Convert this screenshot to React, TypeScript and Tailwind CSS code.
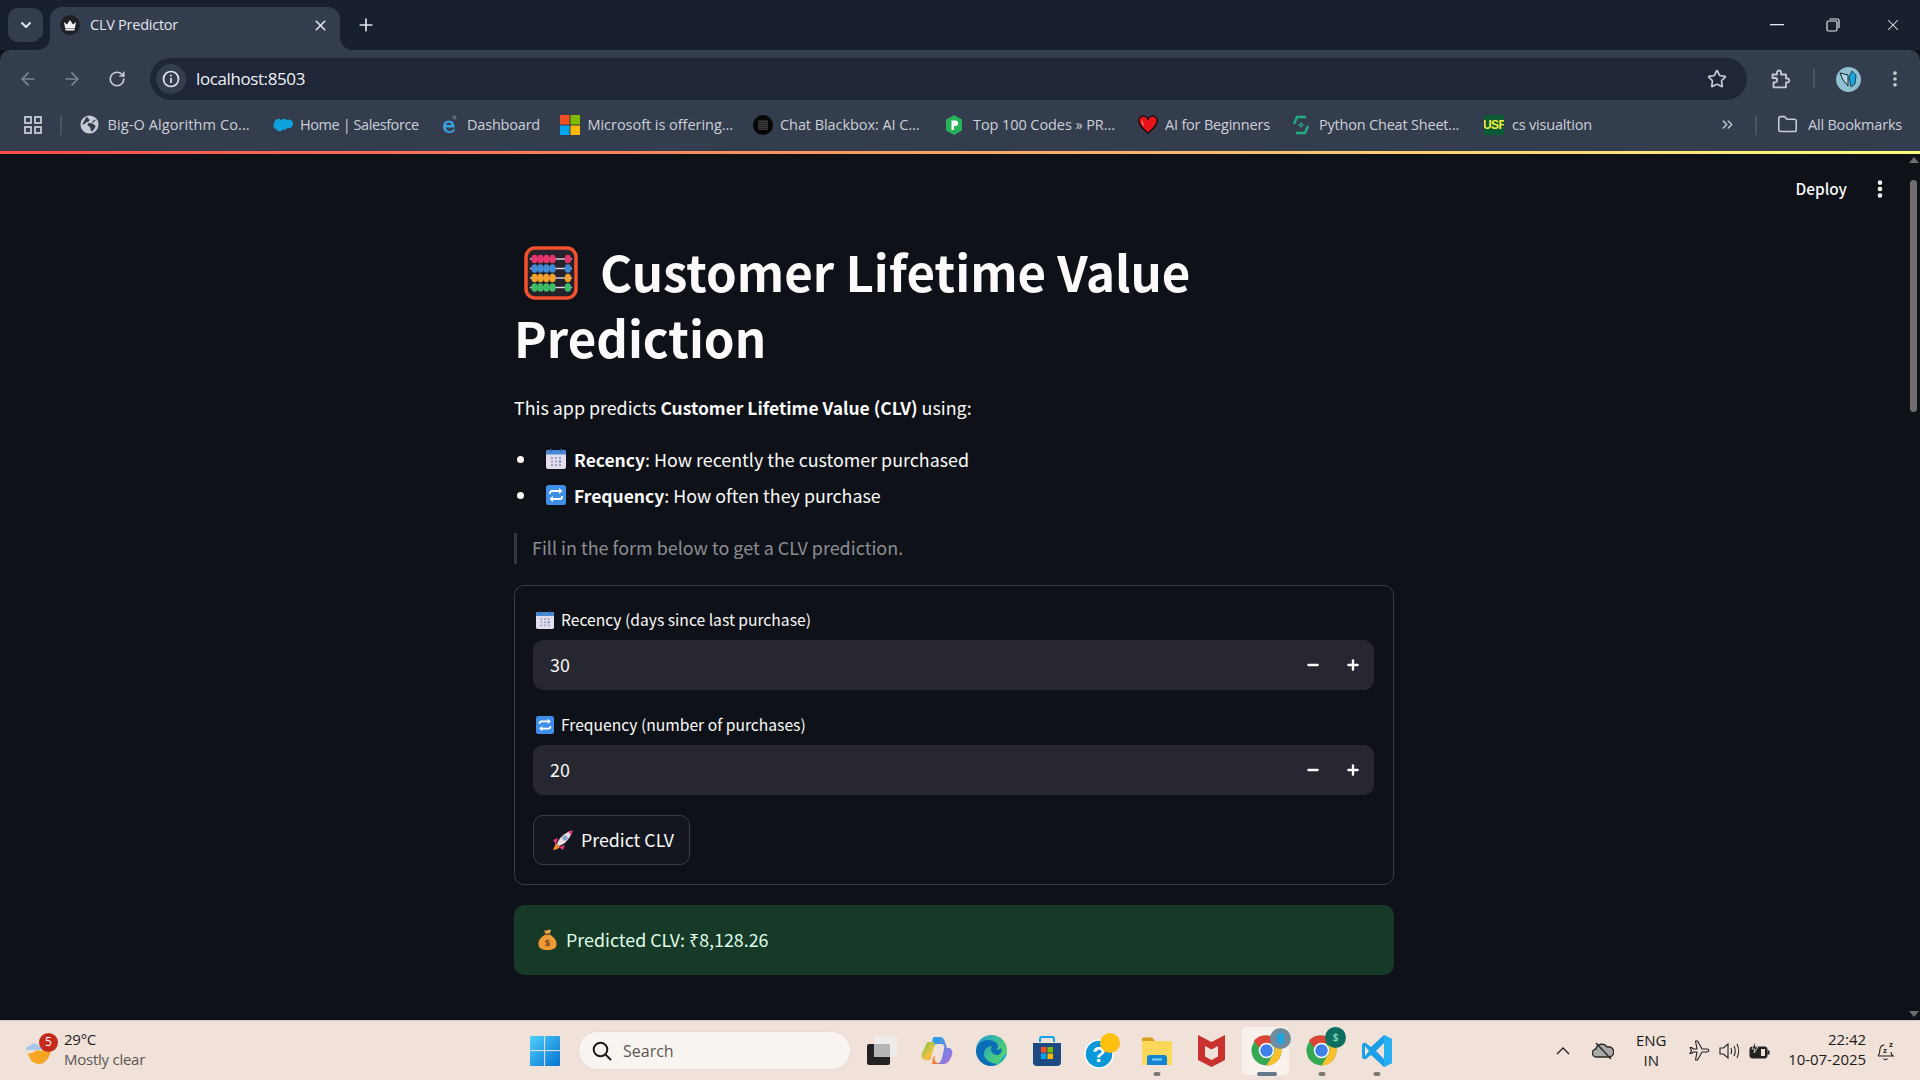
import React from "react";
import { ArrowLeft, ArrowRight, RotateCw, Star, X, Plus, ChevronDown, ChevronsRight, Folder, EllipsisVertical, Minus } from "lucide-react";

function Crown() {
  return (
    <svg width="20" height="20" viewBox="0 0 20 20">
      <circle cx="10" cy="10" r="10" fill="#1d2027" />
      <path d="M4 7l3 2.6L10 5l3 4.6L16 7l-1.2 6.5H5.200z" fill="#f5f5f5" />
      <rect x="5.500" y="14" width="9" height="1.500" fill="#f5f5f5" />
    </svg>
  );
}
function Globe() {
  return (
    <svg width="19" height="19" viewBox="0 0 20 20">
      <circle cx="10" cy="10" r="9.500" fill="#c6cbd4" />
      <path d="M7 1.500c1 2 3 2 3 4s-3 1.500-4 3-3 1-4 2M17 5c-2 0-4 1-4 3s2 2 3 3-1 4-3 6c-1 1-2-1-2-3s-3-2-3-4 3-2 5-1" fill="#333c4d" />
    </svg>
  );
}
function Salesforce() {
  return (
    <svg width="20" height="16" viewBox="0 0 24 17">
      <path d="M10 3a4.500 4.500 0 0 1 7-.6 5 5 0 0 1 7 4.700 5 5 0 0 1-6.500 4.800 4 4 0 0 1-5.500 1.800 4.600 4.600 0 0 1-8.300-.4A4.200 4.200 0 0 1 1.500 6.500 4.800 4.800 0 0 1 10 3z" fill="#0ea2dc" />
    </svg>
  );
}
function DashIcon() {
  return (
    <svg width="20" height="20" viewBox="0 0 20 20">
      <path d="M15 13.500c-1 2-2.800 2.700-4.300 2.700-2.400 0-3.700-1.700-3.700-3.700h8.500c.3-4.200-1.800-7-5.500-7-3.800 0-6 3-6 6.200 0 3.500 2.500 6.300 6.500 6.300 2.500 0 4.500-1.100 5.500-3.300zM7.200 10c.2-1.400 1.300-2.300 2.800-2.300s2.400.9 2.500 2.300z" fill="#3aa0dc" />
      <path d="M14 4l3-3M14 1l3 3" stroke="#6b7280" strokeWidth="1.500" />
    </svg>
  );
}
function MsLogo({ size = 20 }: { size?: number }) {
  return (
    <svg width={size} height={size} viewBox="0 0 20 20">
      <rect width="9.500" height="9.500" fill="#f25022" />
      <rect x="10.500" width="9.500" height="9.500" fill="#7fba00" />
      <rect y="10.500" width="9.500" height="9.500" fill="#00a4ef" />
      <rect x="10.500" y="10.500" width="9.500" height="9.500" fill="#ffb900" />
    </svg>
  );
}
function Blackbox() {
  const dots: React.ReactElement[] = [];
  for (let x = 0; x < 5; x++) for (let y = 0; y < 5; y++) dots.push(<circle key={x + "-" + y} cx={6 + x * 2} cy={6 + y * 2} r="0.6" fill="#bbb" />);
  return (
    <svg width="20" height="20" viewBox="0 0 20 20">
      <circle cx="10" cy="10" r="10" fill="#060606" />
      {dots}
    </svg>
  );
}
function PCode() {
  return (
    <svg width="18" height="20" viewBox="0 0 18 20">
      <path d="M9 0l8 4.500v11L9 20l-8-4.500v-11z" fill="#26b15a" />
      <path d="M6.500 15V5.500H11a2.800 2.800 0 0 1 0 5.500H9V15z" fill="#fff" />
    </svg>
  );
}
function Heart() {
  return (
    <svg width="22" height="20" viewBox="0 0 22 20">
      <path d="M11 19C4 13 1 10 1 6a5 5 0 0 1 10-1.500A5 5 0 0 1 21 6c0 4-3 7-10 13z" fill="#e8141c" stroke="#1a0606" strokeWidth="1.500" />
      <path d="M5 5.500c-1 1.500 0 3.500 1 5" stroke="#f88" strokeWidth="1.200" fill="none" />
    </svg>
  );
}
function PyIcon() {
  return (
    <svg width="18" height="20" viewBox="0 0 18 20" fill="none" stroke="#23ad82" strokeWidth="2.400">
      <path d="M14 2H5L2 9M4 18h9l3-7" />
      <path d="M7 10l2-2 2 2-2 2z" strokeWidth="1.200" />
    </svg>
  );
}
function Usf() {
  return (
    <div className="w-[20px] h-[20px] bg-[#0b5a33] flex items-center justify-center overflow-hidden">
      <span className="text-[#f6f03c] text-[12px] font-bold font-['Liberation_Sans',sans-serif] leading-none tracking-[-0.6px]">USF</span>
    </div>
  );
}
function AppsIcon() {
  return (
    <svg width="18" height="18" viewBox="0 0 18 18" fill="none" stroke="#c6cbd4" strokeWidth="1.800">
      <rect x="1" y="1" width="6" height="6" />
      <rect x="11" y="1" width="6" height="6" />
      <rect x="1" y="11" width="6" height="6" />
      <rect x="11" y="11" width="6" height="6" />
    </svg>
  );
}
function ExtIcon() {
  return (
    <svg width="20" height="20" viewBox="0 0 20 20" fill="none" stroke="#c6cbd4" strokeWidth="1.800" strokeLinejoin="round">
      <path d="M1.500 5.500h4.500V3.500a2 2 0 0 1 4 0v2h5v4h2a2 2 0 0 1 0 3.800h-2v5h-12.500v-5h1.500a2 2 0 0 0 0-4.300H1.500z" />
    </svg>
  );
}
function Avatar() {
  return (
    <svg width="25" height="25" viewBox="0 0 25 25">
      <circle cx="12.500" cy="12.500" r="12.500" fill="#8fc0cf" />
      <path d="M12 8L4 6l3 7 5 6z" fill="#a9d8e4" stroke="#14242e" strokeWidth="1" />
      <path d="M13 10l3-6 4 4-1 9-4 3z" fill="#18a6e0" stroke="#14242e" strokeWidth="0.800" />
    </svg>
  );
}
function Abacus() {
  const rows = ["#e5336b", "#3e8ad6", "#f3a02c", "#3ebd68"];
  return (
    <svg width="54" height="54" viewBox="0 0 54 54" className="block">
      <rect x="2" y="2" width="50" height="50" rx="9" fill="#24232b" stroke="#f4522f" strokeWidth="3.500" />
      {rows.map((c, i) => {
        const y = 13 + i * 9.5;
        return (
          <g key={c}>
            <rect x="6" y={y - 0.7} width="42" height="1.400" fill="#e3d4e6" />
            {[10.6, 16.4, 22.4, 28.5, 43.9].map((x) => (
              <ellipse key={x} cx={x} cy={y} rx="3.200" ry="4.300" fill={c} />
            ))}
          </g>
        );
      })}
    </svg>
  );
}
function Cal({ size = 20 }: { size?: number }) {
  return (
    <svg width={size} height={size} viewBox="0 0 20 20" className="shrink-0">
      <rect y="1" width="20" height="19" rx="2" fill="#e2deee" />
      <path d="M0 5.500V3a2 2 0 0 1 2-2h16a2 2 0 0 1 2 2v2.500z" fill="#4a87d4" />
      <rect x="4" y="0" width="1.500" height="3" fill="#2f5fa8" />
      <rect x="14.500" y="0" width="1.500" height="3" fill="#2f5fa8" />
      {[8, 11.5, 15].map((y) => [5, 9, 13].map((x) => <rect key={x + "-" + y} x={x} y={y} width="2" height="2" fill="#a3a1bb" />))}
      <rect x="13" y="11.500" width="2" height="2" fill="#4a87d4" />
    </svg>
  );
}
function Rep({ size = 20 }: { size?: number }) {
  return (
    <svg width={size} height={size} viewBox="0 0 20 20" className="shrink-0">
      <rect width="20" height="20" rx="2.500" fill="#3f8fe8" />
      <path d="M4 9V8a2 2 0 0 1 2-2h9M16 11v1a2 2 0 0 1-2 2H5" fill="none" stroke="#fff" strokeWidth="1.800" />
      <path d="M13 3l3.500 3-3.500 3zM7 11l-3.500 3L7 17z" fill="#fff" />
    </svg>
  );
}
function Rocket() {
  return (
    <svg width="21" height="21" viewBox="0 0 21 21">
      <path d="M4 13l-3 7c3 0 5-1 7-3z" fill="#f08a32" />
      <path d="M1 10l5-2-2 6zM11 20l2-5-6 2z" fill="#f03a78" />
      <path d="M5 14C7 8 12 3 20.500.5 18 9 13 14 7 16z" fill="#ecdfe3" />
      <path d="M16 1.500l4.500-1L19 5.500z" fill="#f03a78" />
      <circle cx="13" cy="8" r="2.300" fill="#6aa6e8" stroke="#b69db8" />
    </svg>
  );
}
function MoneyBag() {
  return (
    <svg width="19" height="22" viewBox="0 0 19 22">
      <path d="M6 1c1 .8 2 .8 3.500.2s2.500-.2 3.500-.2l-1.500 4h-4z" fill="#e8a846" />
      <rect x="6.500" y="4.500" width="6" height="1.600" fill="#7b4b21" />
      <path d="M6.500 6C2 9 0 12 .5 16c.4 3.500 3.500 5 9 5s8.600-1.500 9-5c.5-4-1.500-7-6-10z" fill="#ef9b35" />
      <text x="9.500" y="17" fontSize="9" fontWeight="700" textAnchor="middle" fill="#6b3d1a" fontFamily="Liberation Sans, sans-serif">$</text>
    </svg>
  );
}
function Weather() {
  return (
    <svg width="30" height="30" viewBox="0 0 30 30">
      <path d="M13 14a10 10 0 0 0 14-8c2 9-3 22-12 22-7 0-10-6-11-11 3 1 6-1 9-3z" fill="#f5a623" />
      <path d="M2 14a3.500 3.500 0 0 1 4-4 5 5 0 0 1 9 0 3 3 0 0 1 2 4z" fill="#a8c8ee" />
    </svg>
  );
}
function WinLogo() {
  return (
    <svg width="30" height="30" viewBox="0 0 30 30">
      <defs>
        <linearGradient id="wl" x1="0" y1="0" x2="1" y2="1">
          <stop offset="0" stopColor="#4fd0fb" />
          <stop offset="1" stopColor="#0573d3" />
        </linearGradient>
      </defs>
      <path d="M0 1a1 1 0 0 1 1-1h28a1 1 0 0 1 1 1v28a1 1 0 0 1-1 1H1a1 1 0 0 1-1-1z" fill="url(#wl)" />
      <path d="M14.600 0v30M0 14.600h30" stroke="#f0e1d9" strokeWidth="1" />
    </svg>
  );
}
function TaskView() {
  return (
    <svg width="30" height="30" viewBox="0 0 30 30">
      <rect x="0" y="8" width="23" height="21" rx="2" fill="#222" />
      <rect x="7" y="0" width="23" height="21" rx="2" fill="#ededed" fillOpacity="0.85" />
      <rect x="7" y="8" width="16" height="13" fill="#b5b5b5" />
    </svg>
  );
}
function Copilot() {
  return (
    <svg width="32" height="30" viewBox="0 0 32 30">
      <defs>
        <linearGradient id="cpa" x1="0" y1="0" x2="1" y2="1">
          <stop offset="0" stopColor="#1aa6e8" />
          <stop offset="1" stopColor="#b66bdc" />
        </linearGradient>
        <linearGradient id="cpb" x1="0" y1="0" x2="1" y2="1">
          <stop offset="0" stopColor="#66c34a" />
          <stop offset="0.500" stopColor="#f4c23e" />
          <stop offset="1" stopColor="#f0533d" />
        </linearGradient>
      </defs>
      <path d="M13 1h6c3 0 4 2 5 5l2 6h3c2 2 3 4 2 7-2 6-5 9-8 9h-7c3-1 4-3 5-6l2-9c1-4-1-5-3-5h-4c-2 0-3 2-4 4-1-4-1-11 1-11z" fill="url(#cpa)" />
      <path d="M8 6c-2 0-3 2-4 5L1 17c-1 3 0 7 4 7h4l2-6 2-7c1-3 0-5 0-5zM11 28h8c-5-1-6-4-5-8l-2 1z" fill="url(#cpb)" />
    </svg>
  );
}
function Edge() {
  return (
    <svg width="31" height="31" viewBox="0 0 31 31">
      <defs>
        <linearGradient id="eg" x1="0" y1="0" x2="1" y2="0.600">
          <stop offset="0" stopColor="#1a9bd6" />
          <stop offset="1" stopColor="#55d46a" />
        </linearGradient>
      </defs>
      <circle cx="15.500" cy="15.500" r="15.500" fill="url(#eg)" />
      <path d="M0 15.500C1 8 7 5 12 5c6 0 10 3 10 6.500 0 2-1 3-2 3.500 2 0 4-.5 5-2 2 3-1 7-3 7-3 0-7-2-7-5 0-3 1-4 1-4-4 0-8 3-8 8 0 5 5 9 13 10-1 1-3 2-6 2C7 31 0 24 0 15.500z" fill="#0c6cb8" />
      <path d="M31 17c0 3-2 6-4 8-2 2-5 4-10 4 5-1 8-3 9-6 1-2 3-3 5-6z" fill="#1fa6df" />
    </svg>
  );
}
function Store() {
  return (
    <svg width="30" height="30" viewBox="0 0 30 30">
      <path d="M8 6V3a2 2 0 0 1 2-2h10a2 2 0 0 1 2 2v3" fill="none" stroke="#12a3e8" strokeWidth="2" />
      <path d="M1 7h28a0 0 0 0 1 0 0v19a4 4 0 0 1-4 4H5a4 4 0 0 1-4-4z" fill="#1d4a80" />
      <rect x="9" y="11" width="5.500" height="5.500" fill="#f25022" />
      <rect x="15.500" y="11" width="5.500" height="5.500" fill="#7fba00" />
      <rect x="9" y="17.500" width="5.500" height="5.500" fill="#00a4ef" />
      <rect x="15.500" y="17.500" width="5.500" height="5.500" fill="#ffb900" />
    </svg>
  );
}
function HelpApp() {
  return (
    <svg width="36" height="36" viewBox="0 0 36 36">
      <circle cx="15" cy="21" r="14" fill="#0b98d8" stroke="#fff" strokeWidth="1.500" />
      <text x="15" y="29" fontSize="22" fontWeight="700" textAnchor="middle" fill="#fff" fontFamily="Liberation Sans, sans-serif">?</text>
      <circle cx="26" cy="10" r="10" fill="#fdc00f" />
    </svg>
  );
}
function Explorer() {
  return (
    <svg width="30" height="28" viewBox="0 0 30 28">
      <path d="M0 2a1.500 1.500 0 0 1 1.500-1.500H10L13 4v4H0z" fill="#d7a020" />
      <rect y="4" width="30" height="24" rx="1" fill="#fbd75b" />
      <path d="M5 28v-7a3 3 0 0 1 3-3h14a3 3 0 0 1 3 3v7z" fill="#1386d2" />
      <rect x="10" y="21.500" width="10" height="2" fill="#7fd0f5" />
    </svg>
  );
}
function McAfee() {
  return (
    <svg width="27" height="32" viewBox="0 0 27 32">
      <path d="M0 0l13.500 7L27 0v25l-13.500 7L0 25z" fill="#c8312e" />
      <path d="M7 11l6.500 3.500L20 11v10.500L13.500 25 7 21.500z" fill="#f0e1d9" />
    </svg>
  );
}
function ChromeLogo() {
  return (
    <svg width="31" height="31" viewBox="0 0 32 32">
      <circle cx="16" cy="16" r="15.500" fill="#34a853" />
      <path d="M16 .5A15.500 15.500 0 0 1 29.400 8.200H16a8 8 0 0 0-7.400 5L3 5.800A15.500 15.500 0 0 1 16 .5z" fill="#db4437" />
      <path d="M29.400 8.200A15.500 15.500 0 0 1 16 31.500l6.900-11.500a8 8 0 0 0 0-9l-1-2.800z" fill="#fbc02d" />
      <circle cx="16" cy="16" r="8" fill="#fff" />
      <circle cx="16" cy="16" r="6.400" fill="#3f7fe8" />
    </svg>
  );
}
function VsCode() {
  return (
    <svg width="30" height="32" viewBox="0 0 30 32">
      <path d="M22 0l8 4v24l-8 4-13-12-6 4.500-3-1.500v-14l3-1.500 6 4.500z" fill="#1a9fe8" />
      <path d="M22 8l-8 8 8 8z" fill="#f0e1d9" />
      <path d="M3 11l4 5-4 5z" fill="#f0e1d9" />
      <path d="M22 0l8 4v24l-8 4z" fill="#26b0f2" />
    </svg>
  );
}
function NoCloud() {
  return (
    <svg width="22" height="18" viewBox="0 0 22 18">
      <path d="M5 15a4 4 0 0 1-1-8 6 6 0 0 1 11-2 5 5 0 0 1 3 10z" fill="#a9a9a6" stroke="#2a2a2a" strokeWidth="1.400" />
      <path d="M4 1l15 16" stroke="#2a2a2a" strokeWidth="1.500" />
    </svg>
  );
}
function Plane() {
  return (
    <svg width="21" height="21" viewBox="0 0 21 21" fill="none" stroke="#222" strokeWidth="1.100" strokeLinejoin="round">
      <path d="M1 7.500l1.500 3L1 13.500h1.500l2-1.500h3.500L6.500 20h2L13 12h5c2.500 0 2.500-3 0-3h-5L8.500 1h-2L8 9H4.500l-2-1.500z" />
    </svg>
  );
}
function Volume() {
  return (
    <svg width="21" height="18" viewBox="0 0 21 18" fill="none" stroke="#222" strokeWidth="1.100">
      <path d="M1 6h3.500L9 2v14l-4.500-4H1z" />
      <path d="M12 6c1 2 1 4 0 6M15 4c1.500 3 1.500 7 0 10M18 2c2 4 2 10 0 14" />
    </svg>
  );
}
function Battery() {
  return (
    <svg width="21" height="18" viewBox="0 0 21 18">
      <rect x="1" y="5" width="17" height="11" rx="2" fill="#222" stroke="#222" />
      <rect x="18.500" y="8.500" width="2" height="4" fill="#222" />
      <path d="M6 0L3 7h3l-1 4 4-6H6.500z" fill="#222" stroke="#f0e1d9" strokeWidth="0.800" />
      <rect x="12" y="7" width="4" height="7" fill="#f0e1d9" />
    </svg>
  );
}
function Bell() {
  return (
    <svg width="18" height="22" viewBox="0 0 18 22" fill="none" stroke="#222" strokeWidth="1.100">
      <path d="M1 16c2-2 1.500-4 2-7 .5-2.500 2-4 4.500-4M1 16h15c-1.500-1-2-2-2-4M6.500 18.500c1 1.500 3 1.500 4 0" />
      <text x="6" y="13" fontSize="8" fill="#222" stroke="none" fontWeight="700" fontFamily="Liberation Sans, sans-serif">z</text>
      <text x="12" y="7" fontSize="8" fill="#222" stroke="none" fontWeight="700" fontFamily="Liberation Sans, sans-serif">z</text>
    </svg>
  );
}

const streamlit = "font-['Noto_Sans_CJK_SC','Noto_Sans',sans-serif]";

function Bookmark({ icon, text, w, gap }: { icon: React.ReactNode; text: string; w: string; gap: string }) {
  return (
    <div className="flex items-center shrink-0">
      <div className={"flex items-center justify-center w-[20px] " + gap}>{icon}</div>
      <span className={"whitespace-nowrap text-[#ccd0d8] " + w}>{text}</span>
    </div>
  );
}

function NumberInput({ value }: { value: string }) {
  return (
    <div className="h-[50px] bg-[#262730] rounded-[10px] flex items-center pl-[17px] mt-[6px]">
      <span className="flex-1 text-[17.850px] leading-[26px] pb-[2px] text-[#fafafa]">{value}</span>
      <div className="flex items-center justify-center w-[40px]">
        <Minus size={16} strokeWidth={3.5} color="#fafafa" />
      </div>
      <div className="flex items-center justify-center w-[40px] mr-[1px]">
        <Plus size={16} strokeWidth={3.5} color="#fafafa" />
      </div>
    </div>
  );
}

function TaskSlot({ children, active, dot }: { children: React.ReactNode; active?: boolean; dot?: string }) {
  return (
    <div className="w-[55px] h-[60px] flex items-center justify-center relative shrink-0">
      {active && <div className="absolute left-[3px] right-[5px] top-[6px] bottom-[6px] bg-[#f8f1ec] rounded-[5px]" />}
      <div className="relative flex items-center justify-center">{children}</div>
      {dot && <div className={"absolute bottom-[5px] h-[4px] rounded-full left-1/2 -translate-x-1/2 " + dot} />}
    </div>
  );
}

export default function App() {
  return (
    <div className="w-[1920px] h-[1080px] overflow-hidden flex flex-col bg-[#0e1117] font-['Open_Sans',sans-serif]">
      {/* tab strip */}
      <div className="h-[50px] bg-[#18202e] flex items-end shrink-0">
        <div className="w-[35px] h-[34px] ml-[8px] mb-[8px] rounded-[10px] bg-[#343d4e] flex items-center justify-center">
          <ChevronDown size={16} strokeWidth={3} color="#dfe3ea" />
        </div>
        <div className="relative w-[290px] h-[43px] ml-[7px] bg-[#343d4e] rounded-t-[12px] flex items-center pl-[10px] pb-[7px]">
          <div className="absolute -left-[12px] bottom-0 w-[12px] h-[12px] bg-[radial-gradient(circle_at_0%_0%,#18202e_11.500px,#343d4e_12px)]" />
          <div className="absolute -right-[12px] bottom-0 w-[12px] h-[12px] bg-[radial-gradient(circle_at_100%_0%,#18202e_11.500px,#343d4e_12px)]" />
          <Crown />
          <span className="ml-[10px] text-[14.500px] tracking-[-0.25px] text-[#e3e6ec] flex-1">CLV Predictor</span>
          <X size={17} strokeWidth={2.2} color="#e3e6ec" className="mr-[11px]" />
        </div>
        <div className="ml-[16px] mb-[15px]">
          <Plus size={20} strokeWidth={2} color="#e3e6ec" />
        </div>
        <div className="flex-1" />
        <div className="flex items-center mb-[16px] mr-[18px]">
          <svg width="14" height="2" viewBox="0 0 14 2" className="mr-[42px]"><rect width="14" height="1.300" fill="#e6e8ec" /></svg>
          <svg width="14" height="14" viewBox="0 0 14 14" fill="none" stroke="#e6e8ec" strokeWidth="1.200" className="mr-[44px]">
            <rect x="1" y="3" width="10" height="10" rx="1.500" />
            <path d="M3.500 1H11.500a1.500 1.500 0 0 1 1.500 1.500V10" />
          </svg>
          <X size={18} strokeWidth={1.4} color="#e6e8ec" />
        </div>
      </div>

      {/* toolbar */}
      <div className="h-[50px] bg-[#343d4e] rounded-t-[10px] flex items-start shrink-0 relative">
        <div className="flex items-center h-[42px] mt-[8px]">
          <ArrowLeft size={20} strokeWidth={2} color="#7d8594" className="ml-[18px]" />
          <ArrowRight size={20} strokeWidth={2} color="#7d8594" className="ml-[24px]" />
          <RotateCw size={18} strokeWidth={2.2} color="#c6cbd4" className="ml-[26px]" />
        </div>
        <div className="w-[1597px] h-[42px] mt-[8px] ml-[24px] bg-[#1e2637] rounded-full flex items-center pl-[6px] pr-[20px]">
          <div className="w-[30px] h-[30px] rounded-full bg-[#343d4e] flex items-center justify-center">
            <svg width="18" height="18" viewBox="0 0 18 18" fill="none" stroke="#dfe3ea" strokeWidth="1.700">
              <circle cx="9" cy="9" r="7.500" />
              <path d="M9 8v5M9 4.800v1.600" />
            </svg>
          </div>
          <span className="ml-[10px] flex-1 text-[17px] tracking-[-0.4px] text-[#eef0f4]">localhost:8503</span>
          <Star size={20} strokeWidth={2} color="#c6cbd4" />
        </div>
        <div className="flex items-center h-[42px] mt-[8px]">
          <div className="ml-[24px]"><ExtIcon /></div>
          <div className="w-[2px] h-[20px] bg-[#4a5364] ml-[22px]" />
          <div className="ml-[21px]"><Avatar /></div>
          <div className="ml-[24px]"><EllipsisVertical size={20} strokeWidth={2.4} color="#c6cbd4" /></div>
        </div>
      </div>

      {/* bookmarks */}
      <div className="h-[51px] bg-[#343d4e] flex items-center text-[14.500px] tracking-[-0.2px] shrink-0 pb-[2px]">
        <div className="w-[18px] ml-[24px]"><AppsIcon /></div>
        <div className="w-[2px] h-[20px] bg-[#4a5364] ml-[18px] mr-[17px]" />
        <div className="flex items-center w-[1640px]">
          <Bookmark icon={<Globe />} text="Big-O Algorithm Co..." w="w-[165.500px] tracking-[0.1px]" gap="mr-[8.500px]" />
          <Bookmark icon={<Salesforce />} text="Home | Salesforce" w="w-[139px] tracking-[-0.42px]" gap="mr-[7px]" />
          <Bookmark icon={<DashIcon />} text="Dashboard" w="w-[93px]" gap="mr-[8px]" />
          <Bookmark icon={<MsLogo />} text="Microsoft is offering..." w="w-[165.500px] tracking-[-0.04px]" gap="mr-[7.500px]" />
          <Bookmark icon={<Blackbox />} text="Chat Blackbox: AI C..." w="w-[164px] tracking-[-0.07px]" gap="mr-[7px]" />
          <Bookmark icon={<PCode />} text="Top 100 Codes » PR..." w="w-[165px] tracking-[-0.08px]" gap="mr-[9px]" />
          <Bookmark icon={<Heart />} text="AI for Beginners" w="w-[126px]" gap="mr-[7px]" />
          <Bookmark icon={<PyIcon />} text="Python Cheat Sheet..." w="w-[165px]" gap="mr-[8px]" />
          <Bookmark icon={<Usf />} text="cs visualtion" w="w-[80px]" gap="mr-[8px]" />
        </div>
        <ChevronsRight size={17} strokeWidth={2} color="#c6cbd4" />
        <div className="w-[2px] h-[20px] bg-[#4a5364] ml-[19px]" />
        <Folder size={21} strokeWidth={1.8} color="#c6cbd4" className="ml-[20px]" />
        <span className="ml-[10px] text-[#ccd0d8] whitespace-nowrap">All Bookmarks</span>
      </div>

      <div className="h-[3px] shrink-0 bg-[linear-gradient(90deg,#ff4b4b,#fffd80)]" />

      {/* page */}
      <div className={"flex-1 flex min-h-0 " + streamlit}>
        <div className="flex-1 flex flex-col min-w-0 text-[#fafafa]">
          <div className="h-[70px] flex items-center justify-end shrink-0 pr-[17px]">
            <span className="text-[15.400px] font-medium mr-[22px]">Deploy</span>
            <EllipsisVertical size={22} strokeWidth={3} color="#fafafa" />
          </div>
          <div className="w-[880px] mx-auto pt-[14px]">
            <h1 className="text-[49.200px] leading-[66px] font-bold">
              <span className="inline-block h-[54px] leading-[0] align-[-8px] ml-[10px] mr-[22px]"><Abacus /></span>
              Customer Lifetime Value Prediction
            </h1>
            <p className="text-[17.850px] leading-[32px] mt-[21px]">
              This app predicts <b className="font-bold text-[17.450px] leading-[20px]">Customer Lifetime Value (CLV)</b> using:
            </p>
            <ul className="mt-[20px] text-[17.850px] leading-[32px]">
              <li className="flex items-center">
                <span className="w-[7px] h-[7px] rounded-full bg-[#fafafa] ml-[3px] mr-[22px]" />
                <Cal />
                <span className="ml-[8px]"><b className="font-bold text-[17.450px] leading-[20px]">Recency</b>: How recently the customer purchased</span>
              </li>
              <li className="flex items-center mt-[4px]">
                <span className="w-[7px] h-[7px] rounded-full bg-[#fafafa] ml-[3px] mr-[22px]" />
                <Rep />
                <span className="ml-[8px]"><b className="font-bold text-[17.450px] leading-[20px]">Frequency</b>: How often they purchase</span>
              </li>
            </ul>
            <blockquote className="mt-[22px] border-l-[3px] border-[#33363d] pl-[15px] pb-[2px] text-[17.950px] leading-[29px] text-[#8b8d93]">
              Fill in the form below to get a CLV prediction.
            </blockquote>

            <div className="mt-[21px] border border-[#3a3c43] rounded-[10px] pl-[18px] pr-[19px] pt-[20px] pb-[19px]">
              <div className="h-[28px] flex items-center pl-[3px] text-[15.650px] text-[#fafafa]">
                <Cal size={18} />
                <span className="ml-[7px]">Recency (days since last purchase)</span>
              </div>
              <NumberInput value="30" />
              <div className="h-[28px] flex items-center pl-[3px] text-[15.650px] text-[#fafafa] mt-[21px]">
                <Rep size={18} />
                <span className="ml-[7px]">Frequency (number of purchases)</span>
              </div>
              <NumberInput value="20" />
              <div className="mt-[20px] w-[157px] h-[50px] border border-[#3a3c43] bg-[#13161e] rounded-[10px] flex items-center pl-[18px]">
                <Rocket />
                <span className="ml-[8px] pb-[3px] text-[17.800px] leading-[26px]">Predict CLV</span>
              </div>
            </div>

            <div className="mt-[20px] h-[70px] bg-[#173928] rounded-[10px] flex items-center pl-[24px] text-[17.850px] text-[#dffde9]">
              <MoneyBag />
              <span className="ml-[9px] pb-[2px] leading-[26px]">Predicted CLV: ₹8,128.26</span>
            </div>
          </div>
        </div>
        {/* scrollbar */}
        <div className="w-[12px] shrink-0 flex flex-col items-center pt-[3px] pb-[3px] pr-[1px]">
          <div className="w-0 h-0 border-l-[5px] border-r-[5px] border-b-[6px] border-l-transparent border-r-transparent border-b-[#6e6e6e]" />
          <div className="w-[7px] h-[232px] rounded-full bg-[#6e6e6e] mt-[17px]" />
          <div className="flex-1" />
          <div className="w-0 h-0 border-l-[5px] border-r-[5px] border-t-[6px] border-l-transparent border-r-transparent border-t-[#6e6e6e]" />
        </div>
      </div>

      {/* taskbar */}
      <div className="h-[60px] shrink-0 bg-[#f0e1d9] border-t border-[#d8cbc4] flex items-center text-[#1b1b1b] font-['Open_Sans',sans-serif] relative">
        <div className="relative ml-[24px] w-[30px] h-[30px]">
          <Weather />
          <div className="absolute -top-[3px] left-[15px] w-[19px] h-[19px] rounded-full bg-[#c42b1c] flex items-center justify-center text-white text-[12px]">5</div>
        </div>
        <div className="ml-[10px] w-[466px] text-[15px] tracking-[-0.25px] leading-[20px] pb-[4px]">
          <div>29°C</div>
          <div className="text-[#5a5654]">Mostly clear</div>
        </div>
        <WinLogo />
        <div className="ml-[18px] w-[273px] h-[39px] rounded-full bg-[#faf4f0] border border-[#e6dcd6] flex items-center pl-[13px]">
          <svg width="20" height="20" viewBox="0 0 20 20" fill="none" stroke="#1b1b1b" strokeWidth="2">
            <circle cx="8.500" cy="8.500" r="6.800" />
            <path d="M13.500 13.500L19 19" />
          </svg>
          <span className="ml-[11px] text-[16px] text-[#5a5654]">Search</span>
        </div>
        <div className="ml-[3px] flex items-center">
          <TaskSlot><TaskView /></TaskSlot>
          <TaskSlot><Copilot /></TaskSlot>
          <TaskSlot><Edge /></TaskSlot>
          <TaskSlot><Store /></TaskSlot>
          <TaskSlot><HelpApp /></TaskSlot>
          <TaskSlot dot="w-[7px] bg-[#7c7772]"><Explorer /></TaskSlot>
          <TaskSlot><McAfee /></TaskSlot>
          <TaskSlot active dot="w-[20px] bg-[#64788a]">
            <ChromeLogo />
            <div className="absolute -top-[7px] -right-[9px] w-[21px] h-[21px] rounded-full bg-[#6f8d9f] flex items-center justify-center">
              <div className="w-[7px] h-[11px] rounded-[3px] bg-[#1fa6e0]" />
            </div>
          </TaskSlot>
          <TaskSlot dot="w-[7px] bg-[#7c7772]">
            <ChromeLogo />
            <div className="absolute -top-[8px] -right-[9px] w-[21px] h-[21px] rounded-full bg-[#0d6e5f] flex items-center justify-center text-[#7ad0b8] text-[10px] font-bold">$</div>
          </TaskSlot>
          <TaskSlot dot="w-[7px] bg-[#7c7772]"><VsCode /></TaskSlot>
        </div>
        <div className="flex-1" />
        <svg width="14" height="8" viewBox="0 0 14 8" fill="none" stroke="#222" strokeWidth="1.400" className="mr-[22px]"><path d="M1 7l6-6 6 6" /></svg>
        <div className="mr-[12px]"><NoCloud /></div>
        <div className="w-[50px] text-center text-[15px] leading-[20px] mr-[13px] pb-[2px]">
          <div>ENG</div>
          <div>IN</div>
        </div>
        <div className="mr-[9px] flex items-center"><Plane /></div>
        <div className="mr-[9px] flex items-center"><Volume /></div>
        <div className="mr-[18px] flex items-center"><Battery /></div>
        <div className="text-right text-[15px] leading-[20px] mr-[11px] tracking-[-0.05px] pb-[3px]">
          <div>22:42</div>
          <div>10-07-2025</div>
        </div>
        <div className="mr-[25px] flex items-center"><Bell /></div>
      </div>
    </div>
  );
}
